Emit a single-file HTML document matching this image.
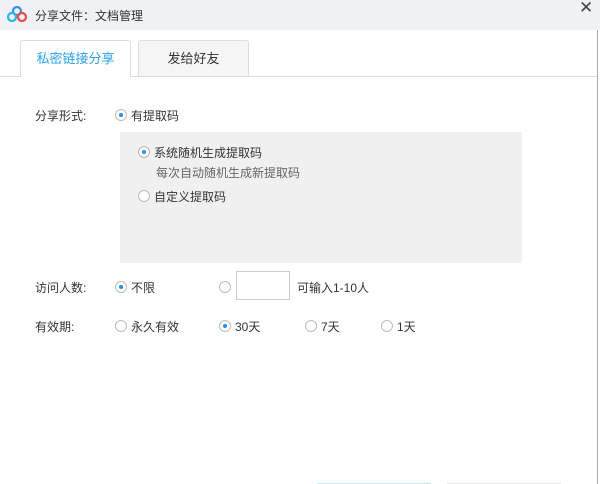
<!DOCTYPE html>
<html><head><meta charset="utf-8"><style>
*{margin:0;padding:0;box-sizing:border-box}
body{width:600px;height:484px;background:#fff;position:relative;overflow:hidden;font-family:"Liberation Sans","Noto Sans CJK SC",sans-serif;font-size:12px;color:#333}
.a{position:absolute;white-space:nowrap}
.r{position:absolute;width:12px;height:12px;border:1px solid #bbb;border-radius:50%;background:#fff}
.r.on::after{content:"";position:absolute;left:3px;top:3px;width:4px;height:4px;border-radius:50%;background:#1e90ff}
</style></head><body>
<div class="a" style="left:0;top:0;width:600px;height:30px;background:#eff1f4"></div>
<svg class="a" style="left:7px;top:6px" width="20" height="16" viewBox="0 0 20 16"><circle cx="10" cy="5" r="4" fill="none" stroke="#3a8ef0" stroke-width="2.2"/><circle cx="5" cy="11" r="4" fill="none" stroke="#29b7e8" stroke-width="2.2"/><circle cx="15" cy="11" r="4" fill="none" stroke="#ea4b4b" stroke-width="2.2"/></svg>
<div class="a" style="left:35px;top:7px;font-size:12px;color:#333">分享文件：文档管理</div>
<div class="a" style="left:579px;top:-2px;font-size:17px;color:#444">✕</div>
<div class="a" style="left:597px;top:30px;width:1px;height:454px;background:#aaa"></div>
<div class="a" style="left:0;top:76px;width:597px;height:1px;background:#ddd"></div>
<div class="a" style="left:20px;top:40px;width:111px;height:37px;background:#fff;border:1px solid #ddd;border-bottom:none;border-radius:3px 3px 0 0;text-align:center;line-height:36px;color:#2aa0f0;font-size:13px">私密链接分享</div>
<div class="a" style="left:138px;top:40px;width:111px;height:36px;background:#f5f5f5;border:1px solid #ddd;border-bottom:none;border-radius:3px 3px 0 0;text-align:center;line-height:36px;color:#333;font-size:13px">发给好友</div>
<div class="a" style="left:35px;top:107px">分享形式:</div>
<div class="r on" style="left:115px;top:109px"></div>
<div class="a" style="left:131px;top:107px">有提取码</div>
<div class="a" style="left:120px;top:132px;width:402px;height:131px;background:#f0f0f0"></div>
<div class="r on" style="left:138px;top:146px"></div>
<div class="a" style="left:154px;top:144px">系统随机生成提取码</div>
<div class="a" style="left:156px;top:164px;color:#666">每次自动随机生成新提取码</div>
<div class="r" style="left:138px;top:190px"></div>
<div class="a" style="left:154px;top:188px">自定义提取码</div>
<div class="a" style="left:35px;top:279px">访问人数:</div>
<div class="r on" style="left:115px;top:281px"></div>
<div class="a" style="left:131px;top:279px">不限</div>
<div class="r" style="left:219px;top:281px"></div>
<div class="a" style="left:236px;top:271px;width:54px;height:29px;border:1px solid #ccc;background:#fff"></div>
<div class="a" style="left:297px;top:279px">可输入1-10人</div>
<div class="a" style="left:35px;top:318px">有效期:</div>
<div class="r" style="left:115px;top:320px"></div>
<div class="a" style="left:131px;top:318px">永久有效</div>
<div class="r on" style="left:219px;top:320px"></div>
<div class="a" style="left:235px;top:318px">30天</div>
<div class="r" style="left:305px;top:320px"></div>
<div class="a" style="left:321px;top:318px">7天</div>
<div class="r" style="left:381px;top:320px"></div>
<div class="a" style="left:397px;top:318px">1天</div>
<div class="a" style="left:317px;top:483px;width:114px;height:1px;background:#bfe9f7"></div>
<div class="a" style="left:447px;top:483px;width:114px;height:1px;background:#e8e8e8"></div>
</body></html>
